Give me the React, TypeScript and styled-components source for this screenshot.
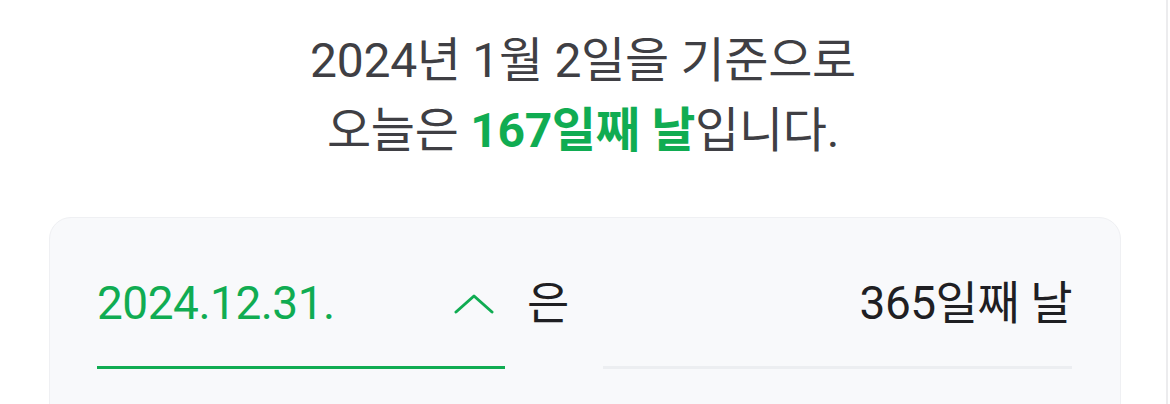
import React from "react";
import styled, { createGlobalStyle } from "styled-components";

const GlobalStyle = createGlobalStyle`
  html, body {
    margin: 0;
    padding: 0;
    background: #ffffff;
  }
  body {
    font-family: Roboto, "Noto Sans CJK KR", sans-serif;
    -webkit-font-smoothing: antialiased;
  }
`;

const GREEN = "#10ac52";

const Page = styled.div`
  width: 1168px;
  min-height: 404px;
  border-right: 2px solid #ececee;
  box-sizing: border-box;
  overflow: hidden;
`;

const Header = styled.h1`
  margin: 0;
  padding-top: 26px;
  text-align: center;
  font-size: 48px;
  font-weight: 400;
  line-height: 70px;
  letter-spacing: -0.3px;
  color: #3f3f44;
`;

const Highlight = styled.strong`
  color: ${GREEN};
  font-weight: 700;
`;

const Card = styled.section`
  margin: 51px 45px 0 49px;
  padding: 55px 48px 60px 47px;
  min-height: 260px;
  box-sizing: border-box;
  background: #f8f9fb;
  border: 1px solid #eff0f3;
  border-radius: 22px;
`;

const Row = styled.div`
  display: flex;
  align-items: flex-start;
`;

const Field = styled.div<{ $active?: boolean }>`
  display: flex;
  align-items: center;
  justify-content: ${(p) => (p.$active ? "space-between" : "flex-end")};
  flex: ${(p) => (p.$active ? "0 0 397px" : "1 1 auto")};
  padding: 0 ${(p) => (p.$active ? 11 : 0)}px 33px 0;
  border-bottom: 3px solid ${(p) => (p.$active ? GREEN : "#eceef1")};
`;

const Value = styled.span<{ $active?: boolean }>`
  font-size: 46px;
  line-height: 60px;
  letter-spacing: -0.5px;
  color: ${(p) => (p.$active ? GREEN : "#1f1f23")};
`;

const Particle = styled.span`
  margin: 0 34px 0 22px;
  font-size: 46px;
  line-height: 60px;
  color: #1f1f23;
`;

const Chevron = styled.svg`
  width: 40px;
  height: 22px;
  margin-top: 2px;
`;

const ChevronUp = () => (
  <Chevron viewBox="0 0 40 22" fill="none">
    <polyline
      points="2,19 20,3 38,19"
      stroke={GREEN}
      strokeWidth="3"
      strokeLinecap="round"
      strokeLinejoin="round"
    />
  </Chevron>
);

export default function App() {
  return (
    <>
      <GlobalStyle />
      <Page>
        <Header>
          2024년 1월 2일을 기준으로
          <br />
          오늘은 <Highlight>167일째 날</Highlight>입니다.
        </Header>
        <Card>
          <Row>
            <Field $active>
              <Value $active>2024.12.31.</Value>
              <ChevronUp />
            </Field>
            <Particle>은</Particle>
            <Field>
              <Value>365일째 날</Value>
            </Field>
          </Row>
        </Card>
      </Page>
    </>
  );
}
